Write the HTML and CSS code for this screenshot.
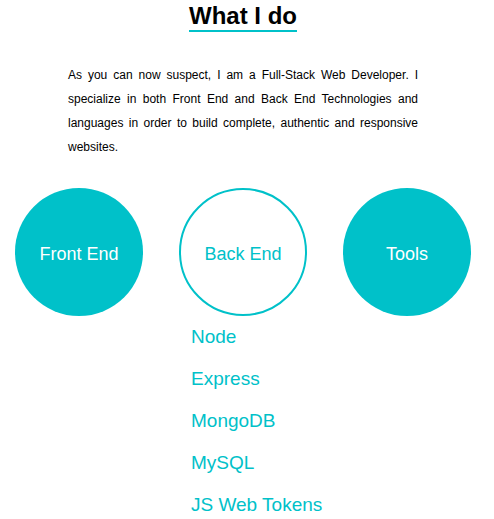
FILE: index.html
```html
<!DOCTYPE html>
<html>
<head>
<meta charset="utf-8">
<link rel="stylesheet" href="styles.css">
</head>
<body>
<main class="page">
  <div class="title-wrap"><h2 class="title">What I do</h2></div>
  <p class="intro">As you can now suspect, I am a Full-Stack Web Developer. I specialize in both Front End and Back End Technologies and languages in order to build complete, authentic and responsive websites.</p>
  <div class="circles">
    <div class="circle filled">Front End</div>
    <div class="circle outline">Back End</div>
    <div class="circle filled">Tools</div>
  </div>
  <ul class="skills">
    <li>Node</li>
    <li>Express</li>
    <li>MongoDB</li>
    <li>MySQL</li>
    <li>JS Web Tokens</li>
  </ul>
</main>
</body>
</html>
```
FILE: styles.css
```css
html, body {
  margin: 0;
  padding: 0;
  background: #fff;
}
body {
  font-family: "Liberation Sans", Arial, sans-serif;
  color: #000;
}
.page {
  width: 486px;
  display: flex;
  flex-direction: column;
}
.title-wrap {
  display: flex;
  justify-content: center;
  margin-top: 2px;
}
.title {
  margin: 0;
  font-size: 24px;
  font-weight: bold;
  line-height: 27.6px;
  border-bottom: 2px solid #00c1c9;
}
.intro {
  width: 350px;
  margin: 31px auto 0;
  font-size: 12px;
  line-height: 24px;
  text-align: justify;
}
.circles {
  display: flex;
  justify-content: center;
  gap: 36px;
  margin-top: 29px;
}
.circle {
  width: 128px;
  height: 128px;
  box-sizing: border-box;
  border-radius: 50%;
  display: flex;
  align-items: center;
  justify-content: center;
  padding-top: 6px;
  font-size: 18px;
}
.filled {
  background: #00c1c9;
  color: #fff;
}
.outline {
  border: 2px solid #00c1c9;
  color: #00c1c9;
}
.skills {
  list-style: none;
  margin: 0 0 0 191px;
  padding: 0;
}
.skills li {
  font-size: 19px;
  line-height: 42px;
  color: #00c1c9;
}
```
